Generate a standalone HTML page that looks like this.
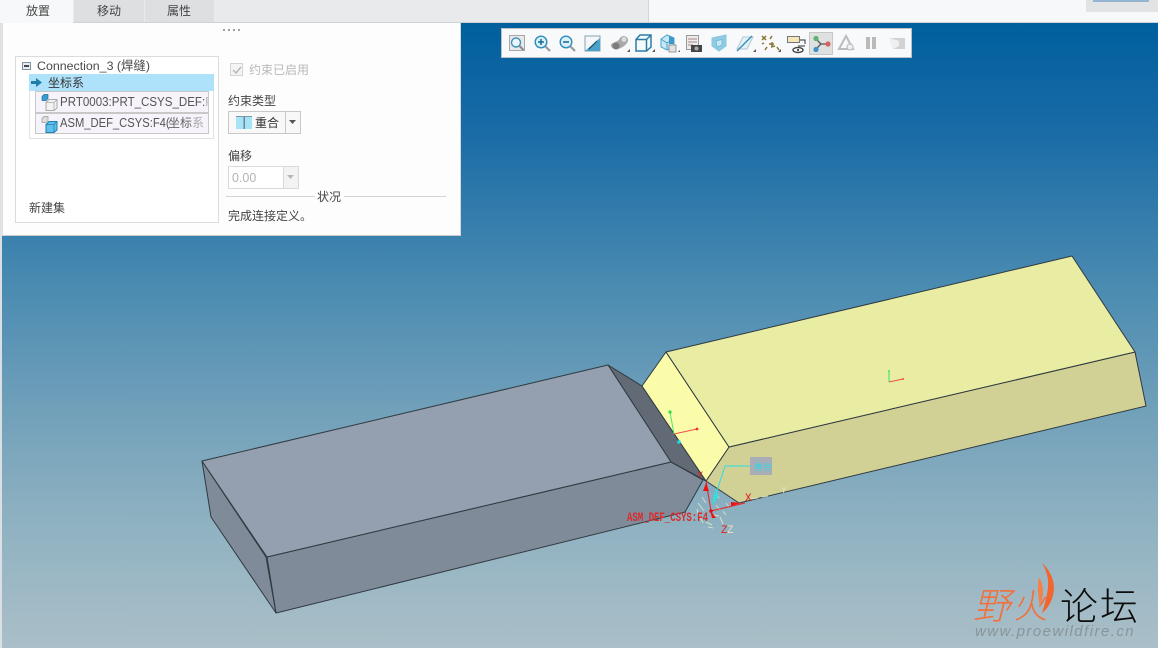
<!DOCTYPE html>
<html><head><meta charset="utf-8">
<style>
html,body{margin:0;padding:0}
body{width:1158px;height:648px;overflow:hidden;position:relative;background:#5c93b4;font-family:"Liberation Sans","Noto Sans CJK SC",sans-serif;font-size:12px;color:#444}
#w{position:absolute;left:0;top:0;width:1158px;height:648px;overflow:hidden;filter:blur(.35px)}
.a{position:absolute;white-space:nowrap;line-height:16px}
.bg{position:absolute;left:0;top:23px;width:1158px;height:625px;background:linear-gradient(180deg,#005f9e 0%,#1a6ca6 18%,#4a8bb1 42%,#6d9eb9 60%,#8cb0c0 78%,#aabfc8 100%)}
.box{position:absolute;box-sizing:border-box}
.n{display:inline-block;transform-origin:0 50%}
</style></head><body><div id="w">
<div class="bg"></div>
<div class="box" style="left:0;top:23px;width:2px;height:625px;background:#d9dfe3"></div>

<svg class="a" style="left:0;top:0" width="1158" height="648" viewBox="0 0 1158 648">
<g stroke="#2f3a40" stroke-width="1" stroke-linejoin="round">
<polygon points="202,461 266,557 276,613 211,517" fill="#808b99"/>
<polygon points="267,557 671,462 703,480 685,512 276,613" fill="#808b99"/>
<polygon points="608,365 642,386 706,481 671,462" fill="#626a76"/>
<polygon points="202,461 608,365 671,462 267,557" fill="#949fb0"/>
<polygon points="729,447 1135,352 1146,406 739,503 706,481" fill="#d1d195"/>
<polygon points="642,386 666,352 729,447 706,481" fill="#fbfcaa"/>
<polygon points="666,352 1072,256 1135,352 729,447" fill="#e9eda3"/>
</g>
<!-- datum csys on part -->
<path d="M889,382V371" stroke="#35e070" stroke-width="1"/><path d="M889,382L903,379" stroke="#f0504a" stroke-width="1"/>
<circle cx="889" cy="371" r="1" fill="#35e070"/><circle cx="903" cy="379" r="1" fill="#f0504a"/>
<path d="M670,412L674,434" stroke="#4ee870" stroke-width="1"/><path d="M674,434L697,429" stroke="#f0504a" stroke-width="1"/>
<circle cx="670" cy="412" r="1.600" fill="#28e040"/><circle cx="697" cy="429" r="1.400" fill="#f03030"/>
<circle cx="679" cy="442" r="1.800" fill="#19d8e8"/>
<!-- callout -->
<path d="M750,466H725L715,497L712,505" stroke="#27e0e0" stroke-width="1" fill="none"/>
<rect x="750" y="457" width="22" height="18" fill="#a9adb5"/>
<text x="754" y="470" font-size="9" fill="#33d7e6" font-family="Liberation Sans,Noto Sans CJK SC,sans-serif">重合</text>
<!-- pale construction csys -->
<g stroke="#dfe6c8" stroke-width="1" fill="none" opacity=".85">
<path d="M698,503l6,8M702,497l4,6M699,515l4,8M706,522l6,3M716,505l4,5M720,517l3,7M714,515l5,1M751,499l7,-1M762,497l6,-1M716,493l3,5M697,509l2,8M723,511l3,4M708,527l5,1M726,503l3,4"/>
</g>
<text x="727" y="533" font-size="11" fill="#e0e6c8" font-family="Liberation Mono">Z</text>
<text x="781" y="493" font-size="9" fill="#dfe6c8" font-family="Liberation Mono">Y</text>
<path d="M716,490L713,503L718,496" stroke="#2fe0e0" stroke-width="1.200" fill="#2fe0e0"/>
<!-- red axes -->
<path d="M706,481L711,511L745,503" stroke="#e6262a" stroke-width="1.100" fill="none"/>
<polygon points="706,483 703,491 709,491" fill="#f01010"/>
<polygon points="731,502 741,503 731,506" fill="#f01010"/>
<polygon points="710,510 716,518 712,518" fill="#f01010"/>
<circle cx="711" cy="511" r="1.800" fill="#e01010"/>
<text x="697" y="478" font-size="10" fill="#e02020" font-family="Liberation Mono">Y</text>
<text x="745" y="501" font-size="11" fill="#e02020" font-family="Liberation Mono">X</text>
<text x="721" y="533" font-size="11" fill="#e02020" font-family="Liberation Mono">Z</text>
<text x="627" y="521" font-size="13" font-weight="bold" fill="#dc2a2a" font-family="Liberation Mono" textLength="81" lengthAdjust="spacingAndGlyphs">ASM_DEF_CSYS:F4</text>
</svg>

<!-- watermark -->
<div class="a" style="left:973px;top:581px;font:italic 37px/44px 'Noto Sans CJK SC','WenQuanYi Zen Hei',sans-serif;color:#f2703c;font-weight:300">野</div>
<div class="a" style="left:1015px;top:583px;font:34px/42px 'Noto Sans CJK SC',sans-serif;color:#f2703c;font-weight:300;transform:skewX(-6deg)">火</div>
<svg class="a" style="left:0;top:0" width="1158" height="648" viewBox="0 0 1158 648"><path d="M1042,563C1052,572 1056,585 1053,595C1051,604 1046,610 1042,613C1045,604 1049,590 1048,580C1047,573 1045,568 1042,563Z" fill="#f4642c"/><path d="M1039,577C1044,585 1044,596 1040,606C1038,597 1037,587 1039,577Z" fill="#f58048"/></svg>
<div class="a" style="left:1060px;top:581px;font:38px/46px 'Noto Sans CJK SC',sans-serif;color:#0d0d0d;font-weight:300;letter-spacing:2px">论坛</div>
<div class="a" style="left:975px;top:623px;font:italic 15px/18px 'Liberation Sans',sans-serif;color:#87959c;letter-spacing:1.450px">www.proewildfire.cn</div>

<!-- top bar -->
<div class="box" style="left:0;top:0;width:648px;height:23px;background:#e9eaec"></div>
<div class="box" style="left:648px;top:0;width:510px;height:23px;background:#f7f8fa;border-left:1px solid #d4d6d8"></div>
<div class="box" style="left:0;top:22px;width:1158px;height:1px;background:#cfd3d6"></div>
<div class="box" style="left:1086px;top:0;width:72px;height:12px;background:#e2e3e5"></div>
<div class="box" style="left:1093px;top:0;width:56px;height:2px;background:#94b4d2"></div>
<div class="box" style="left:0;top:0;width:73px;height:23px;background:#f7f8f9"></div>
<div class="box" style="left:74px;top:0;width:70px;height:22px;background:#dddfe1"></div>
<div class="box" style="left:145px;top:0;width:69px;height:22px;background:#dddfe1"></div>
<div class="a" style="left:26px;top:3px">放置</div>
<div class="a" style="left:97px;top:3px">移动</div>
<div class="a" style="left:167px;top:3px">属性</div>

<!-- panel -->
<div class="box" style="left:0;top:23px;width:3px;height:213px;background:#dfe2e4"></div>
<div class="box" style="left:3px;top:23px;width:458px;height:213px;background:#fdfdfd;border-right:1px solid #d5d7d9;border-bottom:1px solid #c9cccf"></div>
<div class="box" style="left:223px;top:29px;width:17px;height:2px;background:repeating-linear-gradient(90deg,#a0a0a0 0 2px,transparent 2px 5px)"></div>

<div class="box" style="left:15px;top:56px;width:204px;height:167px;background:#fff;border:1px solid #dcdcdc"></div>
<div class="box" style="left:22px;top:62px;width:9px;height:8px;background:#e8ecf0;border:1px solid #7f92a0"></div>
<div class="box" style="left:24px;top:65px;width:5px;height:2px;background:#445"></div>
<div class="a" style="left:37px;top:58px;font-size:12.400px;color:#4a4a4a">Connection_3 (焊缝)</div>
<div class="box" style="left:29px;top:74px;width:185px;height:65px;border:1px solid #e2e2e2"></div>
<div class="box" style="left:29px;top:74px;width:185px;height:17px;background:#aee2fa"></div>
<svg class="a" style="left:30px;top:76px" width="13" height="13" viewBox="0 0 13 13"><path d="M1,5H6V2L12,6.500L6,11V8H1Z" fill="#1d7ea8"/></svg>
<div class="a" style="left:48px;top:75px;color:#333">坐标系</div>

<div class="box" style="left:35px;top:91px;width:174px;height:22px;background:#f6f3fb;border:1px solid #c8c8c8;overflow:hidden"></div>
<div class="box" style="left:35px;top:113px;width:174px;height:21px;background:#f6f3fb;border:1px solid #c8c8c8"></div>
<div class="a" style="left:60px;top:94px;font-size:13.200px;color:#555;transform:scaleX(.875);transform-origin:0 50%">PRT0003:PRT_CSYS_DEF:</div>
<div class="a" style="left:205px;top:94px;width:3px;overflow:hidden;font-size:13.200px;color:#bbb">F</div>
<div class="a" style="left:60px;top:115px;font-size:13.200px;color:#555;transform:scaleX(.85);transform-origin:0 50%">ASM_DEF_CSYS:F4(</div>
<div class="a" style="left:168px;top:115px;color:#666">坐标<span style="color:#aaa">系</span></div>
<svg class="a" style="left:40px;top:93px" width="19" height="18" viewBox="0 0 19 18"><path d="M2,3.500L4,1.500H8V5.500L6,7.500H2Z" fill="#3b9bd0" stroke="#1f6f9f" stroke-width=".7"/><path d="M6,9.500L9,6.500H17V15L14,17.500H6Z" fill="#f2f2f2" stroke="#aaa"/><path d="M14,17V9.500H6M14,9.500L17,6.500" fill="none" stroke="#aaa" stroke-width=".8"/></svg>
<svg class="a" style="left:40px;top:115px" width="19" height="18" viewBox="0 0 19 18"><path d="M2,3.500L4,1.500H8V5.500L6,7.500H2Z" fill="#ddd" stroke="#999" stroke-width=".7"/><path d="M6,9.500L9,6.500H17V15L14,17.500H6Z" fill="#5fc0ec" stroke="#1f7fb0"/><path d="M14,17V9.500H6M14,9.500L17,6.500" fill="none" stroke="#1f7fb0" stroke-width=".8"/></svg>

<div class="a" style="left:29px;top:200px">新建集</div>

<div class="box" style="left:230px;top:63px;width:13px;height:13px;background:#f4f4f4;border:1px solid #d4d4d4"></div>
<svg class="a" style="left:231px;top:64px" width="12" height="12" viewBox="0 0 12 12"><path d="M2,6L5,9L10,3" fill="none" stroke="#b4b4b4" stroke-width="1.400"/></svg>
<div class="a" style="left:249px;top:62px;color:#b9b9b9">约束已启用</div>
<div class="a" style="left:228px;top:93px">约束类型</div>
<div class="box" style="left:228px;top:111px;width:73px;height:23px;background:#f8f8f8;border:1px solid #c8c8c8"></div>
<div class="box" style="left:285px;top:111px;width:1px;height:23px;background:#c8c8c8"></div>
<div class="box" style="left:236px;top:117px;width:16px;height:12px;background:linear-gradient(90deg,#a5e4f6 0 47%,#6b8593 47% 55%,#a5e4f6 55%)"></div>
<div class="box" style="left:236px;top:116px;width:16px;height:1px;background:#7f98a6"></div>
<div class="a" style="left:255px;top:115px;color:#333">重合</div>
<svg class="a" style="left:288px;top:119px" width="10" height="7" viewBox="0 0 10 7"><path d="M1,1H8L4.500,5Z" fill="#555"/></svg>
<div class="a" style="left:228px;top:148px">偏移</div>
<div class="box" style="left:228px;top:166px;width:71px;height:23px;background:#fff;border:1px solid #dadada"></div>
<div class="box" style="left:283px;top:167px;width:15px;height:21px;background:#f3f3f3;border-left:1px solid #dadada"></div>
<svg class="a" style="left:286px;top:174px" width="10" height="7" viewBox="0 0 10 7"><path d="M1,1H8L4.500,5Z" fill="#b8b8b8"/></svg>
<div class="a" style="left:232px;top:170px;font-size:12.500px;color:#b4b4b4">0.00</div>
<div class="box" style="left:226px;top:196px;width:89px;height:1px;background:#d4d4d4"></div>
<div class="box" style="left:344px;top:196px;width:102px;height:1px;background:#d4d4d4"></div>
<div class="a" style="left:317px;top:189px">状况</div>
<div class="a" style="left:228px;top:208px">完成连接定义。</div>

<!-- toolbar -->
<div class="box" style="left:501px;top:28px;width:411px;height:30px;background:#f8f9fa;border:1px solid #b9c0c8"></div>
<div class="box" style="left:809px;top:32px;width:24px;height:23px;background:#dfe0e0;border:1px solid #c6c8c8"></div>
<svg class="a" style="left:501px;top:28px" width="411" height="30" viewBox="501 28 411 30" fill="none">
<!-- zoom refit -->
<rect x="509.500" y="35.500" width="15" height="15" fill="#e8e8e8" stroke="#a8a8a8"/>
<circle cx="516" cy="42.500" r="4.500" fill="#eaf6fc" stroke="#3f91b8" stroke-width="1.400"/><path d="M519.500,46L523.500,50" stroke="#8a8a8a" stroke-width="2"/>
<!-- zoom in -->
<circle cx="541" cy="42" r="5.800" fill="#d9f0fa" stroke="#2f8cb8" stroke-width="1.400"/><path d="M538,42H544M541,39V45" stroke="#156a90" stroke-width="1.500"/><path d="M545.500,46.500L550,51" stroke="#9a9a9a" stroke-width="2.200"/>
<!-- zoom out -->
<circle cx="566" cy="42" r="5.800" fill="#d9f0fa" stroke="#2f8cb8" stroke-width="1.400"/><path d="M563,42H569" stroke="#156a90" stroke-width="1.500"/><path d="M570.500,46.500L575,51" stroke="#9a9a9a" stroke-width="2.200"/>
<!-- repaint -->
<rect x="585" y="36" width="15" height="15" fill="#f4f6f7" stroke="#8aa4b0"/><path d="M585,51H600V38C595,42 591,46 585,51Z" fill="#4aa2ca"/><path d="M589,49L597,41" stroke="#17506b" stroke-width="1.200"/>
<!-- shaded -->
<path d="M611,46C610,42 618,43 620,38C623,34 629,37 628,41C626,47 614,53 611,46Z" fill="#a8a8a8"/><circle cx="616" cy="46" r="3.500" fill="#7c7c7c"/><circle cx="624" cy="39.500" r="2.500" fill="#dcdcdc"/>
<path d="M627,52L630,52V49Z" fill="#555"/>
<!-- cube -->
<path d="M636,39.500H646.500V51H636ZM636,39.500L640,35H651V47L646.500,51M646.500,39.500L651,35" stroke="#2b7da4" stroke-width="1.500" fill="#f4f9fb"/><path d="M652,52L655,52V49Z" fill="#555"/>
<!-- saved views -->
<path d="M661,39L667,35L674,38V47L667,50L661,47Z" fill="#c7e8f6" stroke="#4da3c9"/><path d="M661,39L667,43L674,38M667,43V50" stroke="#4da3c9"/><path d="M669,35.500L674,38V44H669Z" fill="#3d9ac6"/><rect x="669" y="45" width="7" height="7" fill="#e2e2e2" stroke="#777" stroke-width=".7"/><path d="M678,52L680,52V50Z" fill="#555"/>
<!-- view manager -->
<rect x="686.500" y="35.500" width="12" height="14" fill="#ececec" stroke="#999"/><path d="M688,39H697M688,42H697M688,45H693" stroke="#a88" stroke-width="1"/><rect x="691" y="45" width="11" height="7" fill="#454545"/><circle cx="696.500" cy="48.500" r="2" fill="#aaa"/>
<!-- perspective -->
<path d="M712,38L726,35V46L719,51L712,46Z" fill="#8ecbe4" stroke="#8cc6dd"/><path d="M716,41L722,39.500V45L717,47Z" fill="#c8e8f5" stroke="#71b5d2" stroke-width=".8"/>
<!-- planes -->
<path d="M737,49L743,37H753L747,49Z" fill="#e0f2fa" stroke="#b8c8d0"/><path d="M737,51L752,36" stroke="#3d8cb0" stroke-width="1.300"/><path d="M753,52L756,52V49Z" fill="#555"/>
<!-- datum points -->
<path d="M762,36l4,4M766,36l-4,4M772,36l-2,3M765,50l2,-3M771,47l4,-1M772,42v5M769,44h5M777,47l2,3M762,44l2,-1" stroke="#8a7434" stroke-width="1.500"/><path d="M778,52L781,52V49Z" fill="#555"/>
<!-- annot -->
<rect x="787.500" y="36.500" width="12" height="6" fill="#f6e7b8" stroke="#777"/><path d="M800,40H805V44M798,46H805" stroke="#555" stroke-width="1.200"/><ellipse cx="798" cy="50" rx="5" ry="2.500" fill="#fff" stroke="#444" stroke-width="1.400"/><circle cx="798" cy="50" r="1.100" fill="#444"/>
<!-- tri node, active -->
<path d="M816,39L821,44L816,49M821,44H827" stroke="#555" stroke-width="1.300"/>
<circle cx="816" cy="38.500" r="2.600" fill="#5cb26a"/><circle cx="828" cy="44" r="2.600" fill="#d86060"/><circle cx="816" cy="49.500" r="2.600" fill="#3f8fc8"/>
<!-- triangle -->
<path d="M846,36L853,49H839Z" stroke="#bdbdbd" stroke-width="2"/><circle cx="850" cy="47" r="3" fill="#f2f2f2" stroke="#bdbdbd" stroke-width="1.200"/>
<!-- pause -->
<rect x="866" y="37" width="4" height="12" fill="#bababa"/><rect x="872" y="37" width="4" height="12" fill="#bababa"/>
<!-- last -->
<path d="M889,38H905V49H893L899,46V41Z" fill="#d2d2d2"/><path d="M889,38L899,41V46L893,49" fill="#efefef"/>
</svg>
</div></body></html>
